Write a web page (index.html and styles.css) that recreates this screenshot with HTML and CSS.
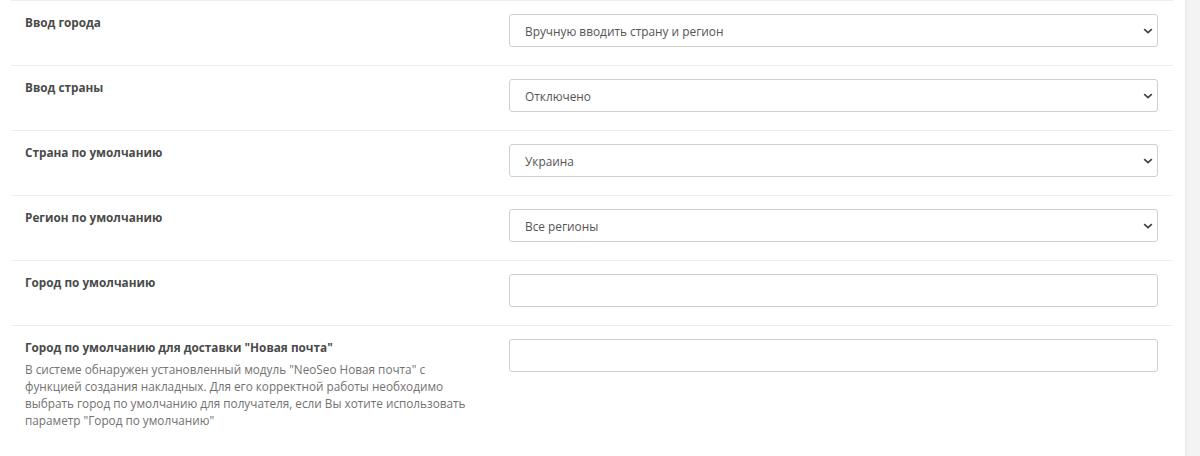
FILE: index.html
```html
<!DOCTYPE html>
<html lang="ru">
<head>
<meta charset="utf-8">
<title>Настройки</title>
<link rel="stylesheet" href="styles.css">
</head>
<body>
<div class="page">
  <main class="main">
    <form class="form">
      <div class="row">
        <label class="label">Ввод города</label>
        <div class="field">
          <div class="select-wrap">
            <select class="control"><option>Вручную вводить страну и регион</option></select>
            <svg class="chev" width="10" height="6" viewBox="0 0 10 6"><path d="M1.2 1.2 L5 4.6 L8.8 1.2" fill="none" stroke="#444" stroke-width="1.8"/></svg>
          </div>
        </div>
      </div>
      <div class="row">
        <label class="label">Ввод страны</label>
        <div class="field">
          <div class="select-wrap">
            <select class="control"><option>Отключено</option></select>
            <svg class="chev" width="10" height="6" viewBox="0 0 10 6"><path d="M1.2 1.2 L5 4.6 L8.8 1.2" fill="none" stroke="#444" stroke-width="1.8"/></svg>
          </div>
        </div>
      </div>
      <div class="row">
        <label class="label">Страна по умолчанию</label>
        <div class="field">
          <div class="select-wrap">
            <select class="control"><option>Украина</option></select>
            <svg class="chev" width="10" height="6" viewBox="0 0 10 6"><path d="M1.2 1.2 L5 4.6 L8.8 1.2" fill="none" stroke="#444" stroke-width="1.8"/></svg>
          </div>
        </div>
      </div>
      <div class="row">
        <label class="label">Регион по умолчанию</label>
        <div class="field">
          <div class="select-wrap">
            <select class="control"><option>Все регионы</option></select>
            <svg class="chev" width="10" height="6" viewBox="0 0 10 6"><path d="M1.2 1.2 L5 4.6 L8.8 1.2" fill="none" stroke="#444" stroke-width="1.8"/></svg>
          </div>
        </div>
      </div>
      <div class="row">
        <label class="label">Город по умолчанию</label>
        <div class="field">
          <input class="control" type="text">
        </div>
      </div>
      <div class="row">
        <div class="label">
          <div>Город по умолчанию для доставки "Новая почта"</div>
          <div class="help">В системе обнаружен установленный модуль "NeoSeo Новая почта" с функцией создания накладных. Для его корректной работы необходимо выбрать город по умолчанию для получателя, если Вы хотите использовать параметр "Город по умолчанию"</div>
        </div>
        <div class="field">
          <input class="control" type="text">
        </div>
      </div>
    </form>
  </main>
  <div class="scroll"></div>
</div>
</body>
</html>
```

FILE: styles.css
```css
html, body {
  margin: 0;
  padding: 0;
  background: #fff;
  font-family: "Open Sans", "Liberation Sans", sans-serif;
  font-size: 11.75px;
  line-height: 17px;
  color: #555;
}
.page {
  display: flex;
  height: 456px;
  overflow: hidden;
}
.main {
  flex: 1;
  padding: 0 12px 0 11px;
}
.form {
  display: flex;
  flex-direction: column;
}
.row {
  display: grid;
  grid-template-columns: 483px 1fr;
  border-top: 1px solid #ededed;
  padding: 13px 0 18px;
}
.label {
  padding: 0 15px 0 14px;
  font-weight: 700;
  color: #4a4a4a;
}
.help {
  margin-top: 5px;
  font-weight: 400;
  color: #727272;
}
.field {
  padding: 0 15px;
}
.select-wrap {
  position: relative;
}
.control {
  display: block;
  width: 100%;
  box-sizing: border-box;
  height: 33px;
  margin: 0;
  padding: 0 15px;
  border: 1px solid #cfcfcf;
  border-radius: 3px;
  background: #fff;
  font-family: "Open Sans", "Liberation Sans", sans-serif;
  font-size: 11.85px;
  color: #555;
  appearance: none;
  -webkit-appearance: none;
  outline: none;
}
.chev {
  position: absolute;
  right: 5px;
  top: 14px;
  pointer-events: none;
}
.scroll {
  width: 15px;
  background: #f3f3f3;
  border-left: 2px solid #ebebeb;
  box-sizing: border-box;
}
```
